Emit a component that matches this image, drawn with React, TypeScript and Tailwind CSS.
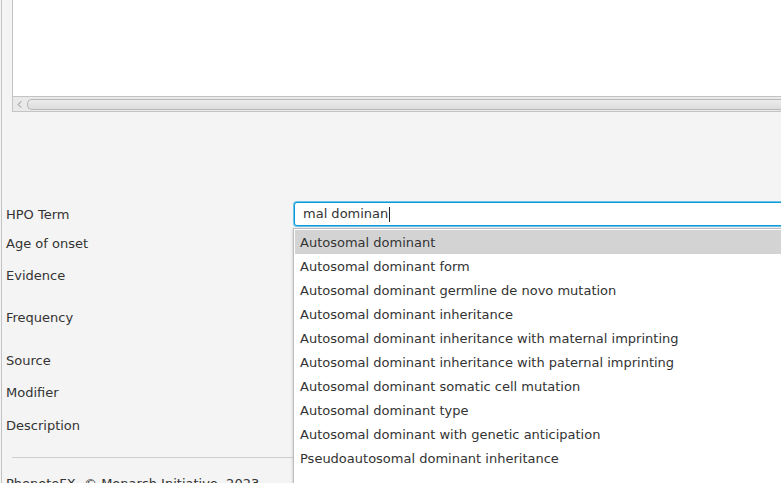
import { ChevronLeft } from "lucide-react";

const rows = [
  { label: "HPO Term", h: "h-[28px]" },
  { label: "Age of onset", h: "h-[30px]" },
  { label: "Evidence", h: "h-[34px]" },
  { label: "Frequency", h: "h-[50px]" },
  { label: "Source", h: "h-[36px]" },
  { label: "Modifier", h: "h-[28px]" },
  { label: "Description", h: "h-[38px]" },
];

const suggestions = [
  "Autosomal dominant",
  "Autosomal dominant form",
  "Autosomal dominant germline de novo mutation",
  "Autosomal dominant inheritance",
  "Autosomal dominant inheritance with maternal imprinting",
  "Autosomal dominant inheritance with paternal imprinting",
  "Autosomal dominant somatic cell mutation",
  "Autosomal dominant type",
  "Autosomal dominant with genetic anticipation",
  "Pseudoautosomal dominant inheritance",
];

export default function App() {
  return (
    <div
      className="relative h-[483px] w-[781px] overflow-hidden bg-[#f4f4f4] text-[13px] text-[#333333]"
      style={{ fontFamily: '"DejaVu Sans", Verdana, sans-serif' }}
    >
      <div className="ml-px flex h-full flex-col border-l border-[#c4c4c4]">
        {/* Table area */}
        <div className="ml-[10px] flex h-[112px] shrink-0 flex-col border-b border-l border-[#c4c4c4] bg-white">
          <div className="flex-1" />
          {/* Horizontal scrollbar */}
          <div className="flex h-[15px] shrink-0 items-center border-t border-[#c4c4c4] bg-[#e9e9e9]">
            <ChevronLeft className="ml-[1px] h-[11px] w-[11px] shrink-0 text-[#6e6e6e]" strokeWidth={1.75} />
            <div className="ml-[2px] h-[11px] flex-1 rounded-l-[5px] border border-r-0 border-[#b8b8b8] bg-gradient-to-b from-[#ececec] to-[#dcdcdc]" />
          </div>
        </div>

        {/* Form */}
        <div className="mt-[89px] flex shrink-0 flex-col">
          {rows.map((row, i) => (
            <div key={row.label} className={`flex shrink-0 items-center ${row.h}`}>
              <div className="w-[292px] shrink-0 pl-[4px]">{row.label}</div>
              {i === 0 && (
                <div className="-mt-[2px] flex h-[24px] w-[520px] shrink-0 items-center rounded-[3px] border border-[#0b9ad6] bg-white pl-[8px] shadow-[0_0_0_1px_#6cc3ea]">
                  <span>mal dominan</span>
                  <span className="ml-px h-[15px] w-px bg-[#222]" />
                </div>
              )}
            </div>
          ))}
        </div>

        <div className="ml-[10px] mt-[12px] h-px shrink-0 bg-[#cfcfcf]" />
        <div className="shrink-0 pl-[4px] pt-[16px] leading-[20px]">PhenoteFX&nbsp;&nbsp;© Monarch Initiative, 2023</div>
      </div>

      {/* Autocomplete popup */}
      <div className="absolute left-[293px] top-[228px] w-[500px] border-l border-t border-[#bdbdbd] bg-white pl-px pt-px shadow-[0_1px_3px_rgba(0,0,0,0.2)]">
        {suggestions.map((s, i) => (
          <div
            key={s}
            className={`flex h-[24px] items-center pl-[5px] pt-px ${i === 0 ? "bg-[#d3d3d3]" : ""}`}
          >
            {s}
          </div>
        ))}
        <div className="h-[20px]" />
      </div>
    </div>
  );
}
